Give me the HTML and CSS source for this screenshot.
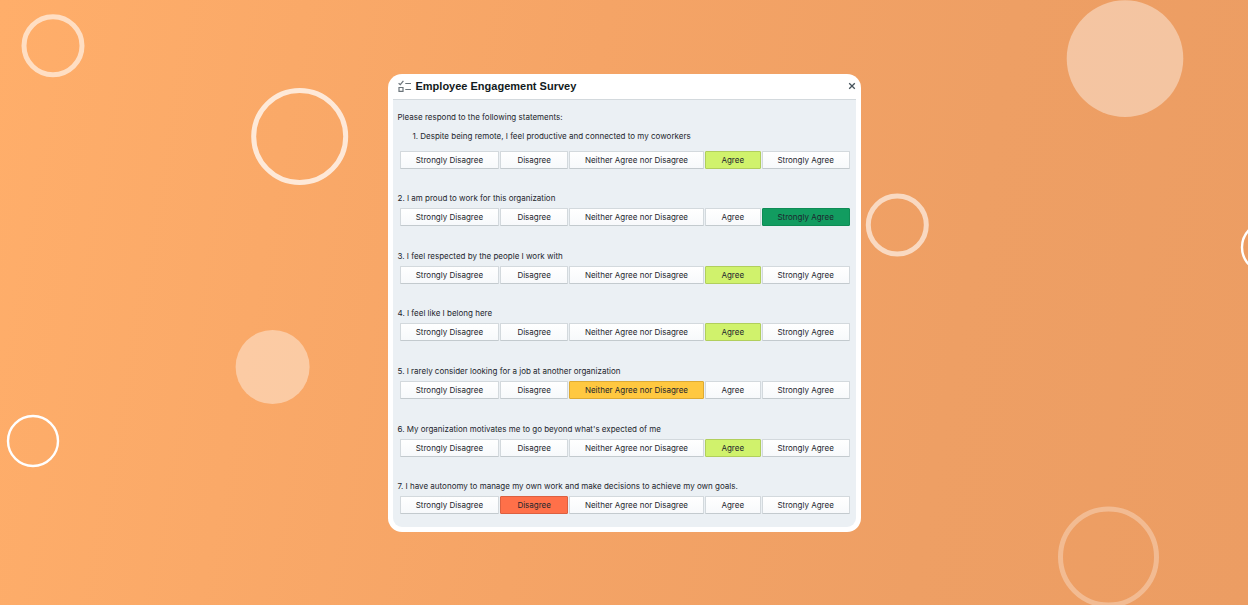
FILE: index.html
```
<!DOCTYPE html>
<html lang="en">
<head>
<meta charset="utf-8">
<meta name="viewport" content="width=device-width, initial-scale=1">
<title>Employee Engagement Survey</title>
<link rel="stylesheet" href="styles.css">
</head>
<body>
<svg class="backdrop" viewBox="0 0 1248 605" preserveAspectRatio="xMidYMid slice" aria-hidden="true">
  <g fill="none" stroke="#fff" stroke-width="5">
    <circle cx="53" cy="45.7" r="29" stroke-opacity=".6"/>
    <circle cx="299.7" cy="136.5" r="46" stroke-opacity=".74"/>
    <circle cx="897.3" cy="225" r="29" stroke-opacity=".6"/>
    <circle cx="1108.5" cy="557" r="48" stroke-opacity=".3"/>
    <circle cx="33" cy="441" r="25" stroke-width="2.4"/>
    <circle cx="1267" cy="247.3" r="25" stroke-width="2.4"/>
  </g>
  <g fill="#fff">
    <circle cx="272.6" cy="367" r="37" fill-opacity=".4"/>
    <circle cx="1125" cy="58.6" r="58.3" fill-opacity=".4"/>
  </g>
</svg>
<main class="survey">
  <header class="survey-header">
    <svg class="survey-icon" viewBox="0 0 13 12" aria-hidden="true" fill="none" stroke="#6b747a" stroke-width="1.2">
      <path d="M.6 3.2l1.7 1.5L5.4.8M7.3 3.5H13M7.3 9.5H13M1 7.5h4v3.9H1z"/>
    </svg>
    <h1 class="survey-title">Employee Engagement Survey</h1>
    <button class="close" type="button" aria-label="Close">
      <svg class="close-icon" viewBox="0 0 8 8" fill="none" stroke="#46535b" stroke-width="1.3"><path d="M1.2 1.2l5.6 5.6M6.8 1.2L1.2 6.8"/></svg>
    </button>
  </header>
  <div class="survey-body">
    <p class="intro">Please respond to the following statements:</p>
    <div class="questions">
      <section class="question question-lead" role="group" aria-labelledby="q1">
        <p class="statement" id="q1">1. Despite being remote, I feel productive and connected to my coworkers</p>
        <div class="options">
          <button class="option" type="button" aria-pressed="false">Strongly Disagree</button>
          <button class="option" type="button" aria-pressed="false">Disagree</button>
          <button class="option" type="button" aria-pressed="false">Neither Agree nor Disagree</button>
          <button class="option agree" type="button" aria-pressed="true">Agree</button>
          <button class="option" type="button" aria-pressed="false">Strongly Agree</button>
        </div>
      </section>
      <section class="question" role="group" aria-labelledby="q2">
        <p class="statement" id="q2">2. I am proud to work for this organization</p>
        <div class="options">
          <button class="option" type="button" aria-pressed="false">Strongly Disagree</button>
          <button class="option" type="button" aria-pressed="false">Disagree</button>
          <button class="option" type="button" aria-pressed="false">Neither Agree nor Disagree</button>
          <button class="option" type="button" aria-pressed="false">Agree</button>
          <button class="option strongly-agree" type="button" aria-pressed="true">Strongly Agree</button>
        </div>
      </section>
      <section class="question" role="group" aria-labelledby="q3">
        <p class="statement" id="q3">3. I feel respected by the people I work with</p>
        <div class="options">
          <button class="option" type="button" aria-pressed="false">Strongly Disagree</button>
          <button class="option" type="button" aria-pressed="false">Disagree</button>
          <button class="option" type="button" aria-pressed="false">Neither Agree nor Disagree</button>
          <button class="option agree" type="button" aria-pressed="true">Agree</button>
          <button class="option" type="button" aria-pressed="false">Strongly Agree</button>
        </div>
      </section>
      <section class="question" role="group" aria-labelledby="q4">
        <p class="statement" id="q4">4. I feel like I belong here</p>
        <div class="options">
          <button class="option" type="button" aria-pressed="false">Strongly Disagree</button>
          <button class="option" type="button" aria-pressed="false">Disagree</button>
          <button class="option" type="button" aria-pressed="false">Neither Agree nor Disagree</button>
          <button class="option agree" type="button" aria-pressed="true">Agree</button>
          <button class="option" type="button" aria-pressed="false">Strongly Agree</button>
        </div>
      </section>
      <section class="question" role="group" aria-labelledby="q5">
        <p class="statement" id="q5">5. I rarely consider looking for a job at another organization</p>
        <div class="options">
          <button class="option" type="button" aria-pressed="false">Strongly Disagree</button>
          <button class="option" type="button" aria-pressed="false">Disagree</button>
          <button class="option neutral" type="button" aria-pressed="true">Neither Agree nor Disagree</button>
          <button class="option" type="button" aria-pressed="false">Agree</button>
          <button class="option" type="button" aria-pressed="false">Strongly Agree</button>
        </div>
      </section>
      <section class="question" role="group" aria-labelledby="q6">
        <p class="statement" id="q6">6. My organization motivates me to go beyond what's expected of me</p>
        <div class="options">
          <button class="option" type="button" aria-pressed="false">Strongly Disagree</button>
          <button class="option" type="button" aria-pressed="false">Disagree</button>
          <button class="option" type="button" aria-pressed="false">Neither Agree nor Disagree</button>
          <button class="option agree" type="button" aria-pressed="true">Agree</button>
          <button class="option" type="button" aria-pressed="false">Strongly Agree</button>
        </div>
      </section>
      <section class="question" role="group" aria-labelledby="q7">
        <p class="statement" id="q7">7. I have autonomy to manage my own work and make decisions to achieve my own goals.</p>
        <div class="options">
          <button class="option" type="button" aria-pressed="false">Strongly Disagree</button>
          <button class="option disagree" type="button" aria-pressed="true">Disagree</button>
          <button class="option" type="button" aria-pressed="false">Neither Agree nor Disagree</button>
          <button class="option" type="button" aria-pressed="false">Agree</button>
          <button class="option" type="button" aria-pressed="false">Strongly Agree</button>
        </div>
      </section>
    </div>
  </div>
</main>
</body>
</html>
```
FILE: styles.css
```
* { box-sizing: border-box; }

body {
  margin: 0;
  min-height: 100vh;
  display: flex;
  justify-content: center;
  align-items: center;
  background: linear-gradient(100deg, #ffae6a 0%, #f5a466 45%, #ee9f64 75%, #ec9d63 100%);
  color: #1d262d;
  font: 8px/12px Inter, "Liberation Sans", Arial, sans-serif;
}

/* Decorative rings and discs behind the panel */
.backdrop {
  position: absolute;
  inset: 0;
  width: 100%;
  height: 100%;
}

.survey {
  position: relative;
  display: flex;
  flex-direction: column;
  width: 100%;
  max-width: 473px;
  min-height: calc(100vh - 147px);
  padding: 0 5px 5px;
  border-radius: 14px;
  background: #fff;
}

.survey-header {
  display: flex;
  align-items: center;
  gap: 5px;
  height: 26px;
  padding-left: 5px;
  border-bottom: 1px solid #d3d9dd;
}

.survey-icon { width: 13px; height: 12px; }

.survey-title {
  flex: 1;
  margin: 0;
  color: #111a20;
  font: 700 11px/16px "Liberation Sans", Arial, sans-serif;
}

.close {
  display: flex;
  padding: 0;
  border: 0;
  background: none;
  cursor: pointer;
}

.close-icon { width: 8px; height: 8px; }

.survey-body {
  flex: 1;
  display: flex;
  flex-direction: column;
  gap: 7px;
  padding: 11px 6px 12px 5px;
  border-radius: 0 0 9px 9px;
  background: #ebf0f4;
}

.intro, .statement { margin: 0; }

.questions {
  flex: 1;
  display: flex;
  flex-direction: column;
  justify-content: space-between;
  gap: 8px;
}

.question {
  display: flex;
  flex-direction: column;
  gap: 4px;
}

.question-lead { gap: 9px; }
.question-lead .statement { padding-left: 15px; }

.options {
  display: grid;
  grid-template-columns: 100fr 68fr 135fr 56fr 88fr;
  gap: 1px;
  padding-left: 2px;
}

.option {
  min-width: 0;
  height: 18px;
  padding: 0;
  border: 1px solid #d3d9dd;
  border-bottom-color: #c3cace;
  border-radius: 1px;
  background: linear-gradient(#fff, #f7f9fb);
  color: inherit;
  font: inherit;
  white-space: nowrap;
  cursor: pointer;
}

.agree { border-color: #b1cf5c; background: #d0f26c; }
.strongly-agree { border-color: #0e8c55; background: #129c60; }
.neutral { border-color: #deaa32; background: #ffc840; }
.disagree { border-color: #dc6040; background: #ff7049; }
```
